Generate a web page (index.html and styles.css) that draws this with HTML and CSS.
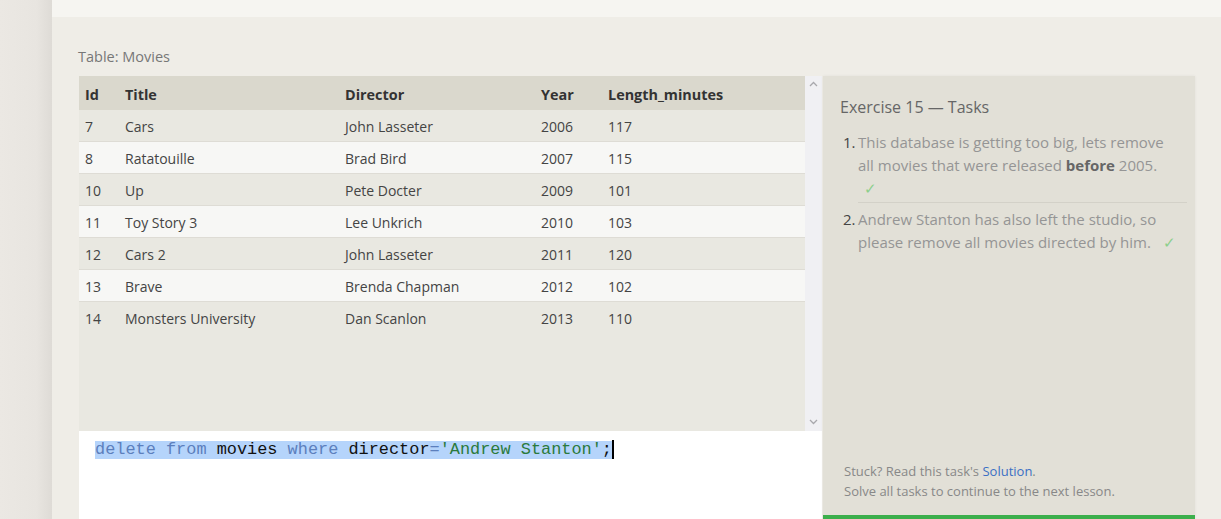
FILE: index.html
```html
<!DOCTYPE html>
<html>
<head>
<meta charset="utf-8">
<link rel="stylesheet" href="styles.css">
</head>
<body>
<div class="sidebar"></div>
<div class="main">
  <div class="topbar"></div>
  <div class="content">
    <div class="table-title">Table: Movies</div>
    <div class="workspace">
      <div class="left">
        <div class="table-wrap">
          <div class="table-area">
            <table class="movies">
              <thead>
                <tr><th class="c1">Id</th><th class="c2">Title</th><th class="c3">Director</th><th class="c4">Year</th><th class="c5">Length_minutes</th></tr>
              </thead>
              <tbody>
                <tr class="odd"><td>7</td><td>Cars</td><td>John Lasseter</td><td>2006</td><td>117</td></tr>
                <tr class="even"><td>8</td><td>Ratatouille</td><td>Brad Bird</td><td>2007</td><td>115</td></tr>
                <tr class="odd"><td>10</td><td>Up</td><td>Pete Docter</td><td>2009</td><td>101</td></tr>
                <tr class="even"><td>11</td><td>Toy Story 3</td><td>Lee Unkrich</td><td>2010</td><td>103</td></tr>
                <tr class="odd"><td>12</td><td>Cars 2</td><td>John Lasseter</td><td>2011</td><td>120</td></tr>
                <tr class="even"><td>13</td><td>Brave</td><td>Brenda Chapman</td><td>2012</td><td>102</td></tr>
                <tr class="odd"><td>14</td><td>Monsters University</td><td>Dan Scanlon</td><td>2013</td><td>110</td></tr>
              </tbody>
            </table>
          </div>
          <div class="scrollbar">
            <svg class="arrow" width="9" height="6" viewBox="0 0 9 6"><path d="M1 5 L4.5 1.5 L8 5" fill="none" stroke="#a8a8ac" stroke-width="1.3"/></svg>
            <svg class="arrow" width="9" height="6" viewBox="0 0 9 6"><path d="M1 1 L4.5 4.5 L8 1" fill="none" stroke="#a8a8ac" stroke-width="1.3"/></svg>
          </div>
        </div>
        <div class="editor">
          <div class="code"><span class="sel"><span class="kw">delete</span> <span class="kw">from</span> movies <span class="kw">where</span> director<span class="op">=</span><span class="str">'Andrew Stanton'</span>;</span><span class="cursor"></span></div>
        </div>
      </div>
      <div class="panel">
        <div class="panel-body">
          <h3 class="panel-title">Exercise 15 — Tasks</h3>
          <ol class="tasks">
            <li class="task"><span class="num">1.</span><div class="task-text">This database is getting too big, lets remove all movies that were released <b>before</b> 2005.<br><span class="check check-block">✓</span></div></li>
            <li class="task"><span class="num">2.</span><div class="task-text">Andrew Stanton has also left the studio, so please remove all movies directed by him. <span class="check">✓</span></div></li>
          </ol>
        </div>
        <div class="panel-foot">
          <div class="hint">Stuck? Read this task's <a class="link">Solution</a>.</div>
          <div class="hint">Solve all tasks to continue to the next lesson.</div>
        </div>
        <div class="progress"></div>
      </div>
    </div>
  </div>
</div>
</body>
</html>
```
FILE: styles.css
```css
html, body {
  margin: 0;
  padding: 0;
  height: 519px;
  overflow: hidden;
}
body {
  display: flex;
  font-family: "Open Sans", "Noto Sans", sans-serif;
  background: #efede7;
}
.sidebar {
  width: 52px;
  flex: none;
  background: linear-gradient(to right, #ebe8e3 0%, #e8e5e0 70%, #dedbd6 100%);
}
.main {
  flex: 1;
  display: flex;
  flex-direction: column;
  background: #efede7;
}
.topbar {
  height: 17px;
  background: #f6f5f1;
  flex: none;
}
.content {
  padding: 0 0 0 26px;
}
.table-title {
  font-size: 14.5px;
  color: #777;
  height: 59px;
  line-height: 18px;
  padding-top: 31px;
  box-sizing: border-box;
}
.workspace {
  display: flex;
}
.left {
  width: 743px;
  margin-left: 1px;
  display: flex;
  flex-direction: column;
}
.table-wrap {
  display: flex;
  height: 355px;
}
.table-area {
  width: 726px;
  background: #e9e8e1;
}
.movies {
  width: 100%;
  border-collapse: collapse;
  font-size: 14px;
  color: #444;
}
.movies th {
  text-align: left;
  font-weight: 700;
  font-size: 14.4px;
  color: #333;
  height: 32px;
  padding: 2px 0 0 6px;
  background: #dad8cd;
}
.movies td {
  height: 29px;
  padding: 2px 0 0 6px;
  border-bottom: 1px solid #dedcd5;
}
.movies .c1 { width: 34px; }
.movies .c2 { width: 214px; }
.movies .c3 { width: 190px; }
.movies .c4 { width: 61px; }
.movies tr.odd td { background: #e9e8e1; }
.movies tr.even td { background: #f7f7f5; }
.movies tr:last-child td { border-bottom: none; }
.scrollbar {
  width: 17px;
  background: #f0f0f3;
  display: flex;
  flex-direction: column;
  justify-content: space-between;
  align-items: center;
  padding: 5px 0 6px;
  box-sizing: border-box;
}
.editor {
  height: 88px;
  background: #fff;
}
.code {
  font-family: "Liberation Mono", "Courier New", monospace;
  font-size: 16.9px;
  line-height: 18px;
  padding: 9px 0 0 16px;
  display: flex;
  align-items: center;
  color: #111;
  white-space: pre;
}
.sel {
  background: #b5d4fb;
}
.kw { color: #5c7fbd; }
.op { color: #5c7fbd; }
.str { color: #2b7a3c; }
.cursor {
  display: inline-block;
  width: 2px;
  height: 19px;
  background: #000;
}
.panel {
  width: 372px;
  margin-left: 1px;
  background: #e2e0d7;
  display: flex;
  flex-direction: column;
  height: 443px;
  box-shadow: 0 0 3px rgba(0,0,0,0.06);
}
.panel-body {
  flex: 1;
  padding: 20px 8px 0 17px;
}
.panel-title {
  margin: 0;
  font-size: 16px;
  font-weight: 400;
  color: #666;
  line-height: 22px;
}
.tasks {
  list-style: none;
  margin: 13px 0 0 0;
  padding: 0;
}
.task {
  display: flex;
  font-size: 15px;
  line-height: 23px;
  color: #959595;
}
.task + .task {
  margin-top: 5px;
}
.task:first-child .task-text {
  border-bottom: 1px solid #d3d1c8;
  padding-bottom: 2px;
  padding-right: 16px;
}
.task-text {
  flex: 1;
}
.num {
  color: #444;
  width: 18px;
  flex: none;
  padding-left: 3px;
  box-sizing: border-box;
}
.task-text b {
  color: #666;
}
.check {
  color: #8ccf8c;
  margin-left: 8px;
}
.check-block {
  margin-left: 6px;
}
.panel-foot {
  padding: 0 17px 14px 21px;
}
.hint {
  font-size: 13px;
  line-height: 20px;
  color: #888;
}
.link {
  color: #3a6fc4;
}
.progress {
  height: 4px;
  background: #3caf4c;
}
```
